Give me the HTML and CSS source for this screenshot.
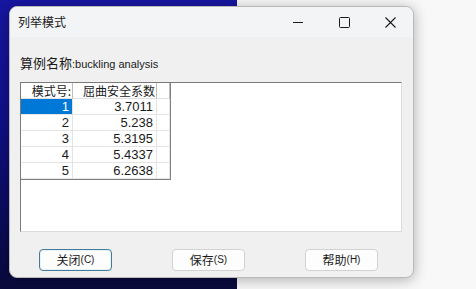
FILE: index.html
```html
<!DOCTYPE html>
<html lang="zh-CN">
<head>
<meta charset="utf-8">
<title>列举模式</title>
<link rel="stylesheet" href="styles.css">
</head>
<body>
<div class="desktop">
  <div class="window">
    <div class="titlebar">
      <span class="title">列举模式</span>
      <div class="controls">
        <span class="ctl">
          <svg width="10" height="10" viewBox="0 0 10 10"><path d="M0 5.5h10" stroke="#1a1a1a" stroke-width="1"/></svg>
        </span>
        <span class="ctl">
          <svg width="11" height="11" viewBox="0 0 11 11"><rect x="0.5" y="0.5" width="10" height="10" rx="1" fill="none" stroke="#1a1a1a" stroke-width="1"/></svg>
        </span>
        <span class="ctl">
          <svg width="11" height="11" viewBox="0 0 11 11"><path d="M0.5 0.5L10.5 10.5M10.5 0.5L0.5 10.5" stroke="#1a1a1a" stroke-width="1.1"/></svg>
        </span>
      </div>
    </div>
    <div class="content">
      <div class="label"><span class="cjk">算例名称</span><span class="latin">:buckling analysis</span></div>
      <div class="listbox">
        <div class="grid">
          <div class="cell head">模式号:</div>
          <div class="cell head">屈曲安全系数</div>
          <div class="cell head"></div>

          <div class="cell num sel">1</div>
          <div class="cell num">3.7011</div>
          <div class="cell"></div>

          <div class="cell num">2</div>
          <div class="cell num">5.238</div>
          <div class="cell"></div>

          <div class="cell num">3</div>
          <div class="cell num">5.3195</div>
          <div class="cell"></div>

          <div class="cell num">4</div>
          <div class="cell num">5.4337</div>
          <div class="cell"></div>

          <div class="cell num">5</div>
          <div class="cell num">6.2638</div>
          <div class="cell"></div>
        </div>
      </div>
      <div class="buttons">
        <button class="btn default">关闭<span class="key">(C)</span></button>
        <button class="btn">保存<span class="key">(S)</span></button>
        <button class="btn">帮助<span class="key">(H)</span></button>
      </div>
    </div>
  </div>
</div>
</body>
</html>
```

FILE: styles.css
```css
html, body {
  margin: 0;
  padding: 0;
}

body {
  width: 476px;
  height: 289px;
  overflow: hidden;
  font-family: "Noto Sans CJK SC", "Liberation Sans", sans-serif;
  color: #1a1a1a;
}

.desktop {
  width: 476px;
  height: 289px;
  box-sizing: border-box;
  padding: 6px 0 0 9px;
  background:
    linear-gradient(180deg, #1616a2 0%, #10108a 40%, #0b0b5c 75%, #0a0a3c 100%) 0 0 / 237px 289px no-repeat,
    #f8f8f8;
}

.window {
  width: 405px;
  height: 272px;
  box-sizing: border-box;
  border: 1px solid #b9b9b9;
  border-radius: 8px;
  background: #f0f0f0;
  box-shadow: 0 2px 14px rgba(0, 0, 0, 0.30);
  display: flex;
  flex-direction: column;
  overflow: hidden;
}

.titlebar {
  height: 30px;
  display: flex;
  align-items: center;
  justify-content: space-between;
  background: #f3f4f6;
  flex: none;
}

.title {
  padding-left: 8px;
  font-size: 12px;
  line-height: 16px;
}

.controls {
  display: flex;
  height: 30px;
}

.ctl {
  width: 46px;
  height: 30px;
  display: flex;
  align-items: center;
  justify-content: center;
}

.ctl svg {
  display: block;
}

.content {
  display: flex;
  flex-direction: column;
  padding: 18px 11px 0 10px;
}

.label {
  height: 16px;
  line-height: 16px;
  display: flex;
  align-items: baseline;
}

.label .cjk {
  font-size: 13px;
}

.label .latin {
  font-family: "Liberation Sans", sans-serif;
  font-size: 11px;
}

.listbox {
  margin-top: 11px;
  height: 150px;
  box-sizing: border-box;
  background: #ffffff;
  border-top: 1px solid #7a7a7a;
  border-left: 1px solid #7a7a7a;
  border-right: 1px solid #dcdcdc;
  border-bottom: 1px solid #dcdcdc;
}

.grid {
  display: grid;
  grid-template-columns: 52px 84px 13px;
  grid-auto-rows: 16px;
  width: 150px;
  box-sizing: border-box;
  border-right: 1px solid #808080;
  border-bottom: 1px solid #808080;
}

.cell {
  box-sizing: border-box;
  border-right: 1px solid #e4e4e4;
  border-bottom: 1px solid #e4e4e4;
  text-align: right;
  padding-right: 2px;
  line-height: 15px;
  font-size: 12px;
  white-space: nowrap;
  overflow: hidden;
}

.cell.head {
  border-right-color: #bdbdbd;
  border-bottom-color: #e0e0e0;
  padding-right: 1px;
}

.cell.num {
  font-family: "Liberation Sans Narrow", "Liberation Sans", sans-serif;
  font-size: 13px;
  padding-right: 3px;
}

.cell.sel {
  background: #0078d7;
  color: #ffffff;
}

.buttons {
  display: flex;
  gap: 60px;
  padding-left: 19px;
  margin-top: 17px;
}

.btn {
  width: 73px;
  height: 22px;
  box-sizing: border-box;
  margin: 0;
  padding: 0;
  background: #fdfdfd;
  border: 1px solid #d2d2d2;
  border-radius: 4px;
  font-family: "Noto Sans CJK SC", "Liberation Sans", sans-serif;
  font-size: 12px;
  color: #1a1a1a;
  display: flex;
  align-items: center;
  justify-content: center;
  line-height: 16px;
}

.btn.default {
  border: 1px solid #3f7d98;
  box-shadow: inset 0 0 0 1px #e8f2f7;
}

.btn .key {
  font-family: "Liberation Sans", sans-serif;
  font-size: 10px;
}
```
